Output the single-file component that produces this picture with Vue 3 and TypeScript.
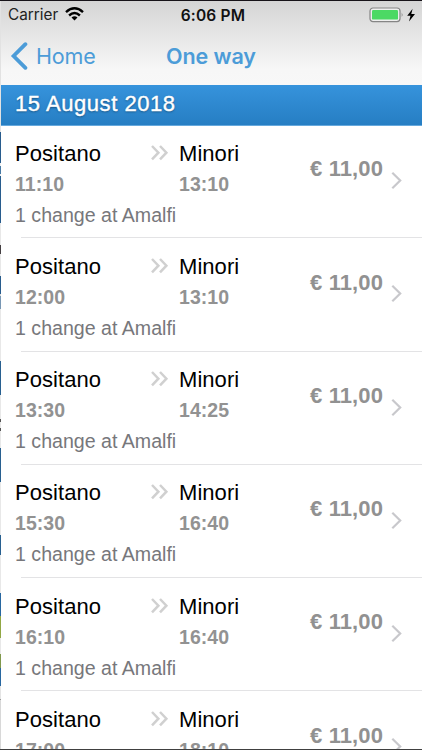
<script setup lang="ts">
interface Trip {
  from: string
  to: string
  departure: string
  arrival: string
  price: string
}

const trips: Trip[] = [
  ['11:10', '13:10'],
  ['12:00', '13:10'],
  ['13:30', '14:25'],
  ['15:30', '16:40'],
  ['16:10', '16:40'],
  ['17:00', '18:10'],
].map(([departure, arrival]) => ({
  from: 'Positano',
  to: 'Minori',
  departure,
  arrival,
  price: '€ 11,00',
}))
</script>

<template>
  <div class="screen">
    <div class="edge"></div>
    <header class="top">
      <div class="status">
        <div class="carrier">
          <span>Carrier</span>
          <svg class="wifi" width="19" height="14" viewBox="0 0 19 14">
            <g fill="none" stroke="#000" stroke-width="2.4">
              <path d="M1 5.2Q9.5-2.5 18 5.2" />
              <path d="M4.1 8.5Q9.5 3.5 14.9 8.5" />
            </g>
            <path d="M6.5 10.6Q9.5 8 12.5 10.6L9.5 13.6Z" />
          </svg>
        </div>
        <span class="clock">6:06 PM</span>
        <svg class="battery" width="48" height="16" viewBox="0 0 48 16">
          <rect x="1" y="1" width="30" height="13.6" rx="3" fill="#eee" stroke="#858585" stroke-width="1.2" />
          <rect x="3" y="3" width="26" height="9.6" rx="1.2" fill="#4cd964" />
          <path d="M32.7 5.5Q34.5 7.8 32.7 10Z" fill="#858585" />
          <path d="M43.6 1.8L38.2 8.8H41.5L40 14.4L46 6.9H42.3Z" />
        </svg>
      </div>
      <nav class="nav">
        <div class="back">
          <svg width="18" height="28" viewBox="0 0 18 28">
            <path d="M15.4 2.2L3.6 14L15.4 25.8" fill="none" stroke="#4c9cd8" stroke-width="3.8" stroke-linecap="round" />
          </svg>
          <span>Home</span>
        </div>
        <h1>One way</h1>
      </nav>
    </header>
    <h2 class="date">15 August 2018</h2>
    <main class="list">
      <article v-for="trip in trips" :key="trip.departure" class="trip">
        <div class="route">
          <div class="place">{{ trip.from }}</div>
          <svg class="arrows" width="20" height="18" viewBox="0 0 20 18">
            <path d="M2 2L8.4 8.7L2 15.4M10 2L16.4 8.7L10 15.4" fill="none" stroke="#d0d0d0" stroke-width="2.5" />
          </svg>
          <div class="place">{{ trip.to }}</div>
          <div class="time">{{ trip.departure }}</div>
          <div></div>
          <div class="time">{{ trip.arrival }}</div>
          <div class="change">1 change at Amalfi</div>
        </div>
        <div class="price">{{ trip.price }}</div>
        <svg class="chevron" width="12" height="19" viewBox="0 0 12 19">
          <path d="M1.3 1.8L9.2 9.5L1.3 17.2" fill="none" stroke="#c8c8cc" stroke-width="2.2" />
        </svg>
      </article>
    </main>
  </div>
</template>

<style>
body {
  overflow: hidden;
}
</style>

<style scoped>
.screen {
  position: relative;
  box-sizing: border-box;
  width: 422px;
  height: 750px;
  overflow: hidden;
  padding-left: 1px;
  border-top: 1px solid #171319;
  border-bottom: 1px solid #404040;
  display: flex;
  flex-direction: column;
  background: #fff;
  font-family: "Liberation Sans", Arial, sans-serif;
}
.edge {
  position: absolute;
  left: 0;
  top: 0;
  width: 1px;
  height: 749px;
  background: linear-gradient(
    #e2e2e2 131px, #285c8d 131px 162px, #eee 162px 165px, #4779a4 165px 173px,
    #eee 173px 175px, #285c8d 175px 222px, #e8e8e8 222px 244px, #443f42 244px 253px,
    #e8e8e8 253px 275px, #285c8d 275px 293px, #ddd 293px 295px, #7897b4 295px 308px,
    #e8e8e8 308px 360px, #286090 360px 394px, #e8e8e8 394px 418px, #555 418px 421px,
    #e8e8e8 421px 427px, #555 427px 430px, #e8e8e8 430px 447px, #286090 447px 481px,
    #e8e8e8 481px 534px, #286090 534px 554px, #e8e8e8 554px 592px, #2867a0 592px 615px,
    #91a744 615px 637px, #e8e8e8 637px 653px, #80984c 653px 667px, #2867a0 667px 685px,
    #e4e4e4 685px 698px, #999 698px 699px, #d8d8d8 699px
  );
}
.top {
  height: 84px;
  flex: none;
  margin-left: -1px;
  background: linear-gradient(#d5d5d5, #f7f7f7 82%, #f8f8f8);
  font-family: Inter, sans-serif;
}
.status {
  display: grid;
  grid-template-columns: 1fr auto 1fr;
  align-items: center;
  height: 27px;
  padding: 0 5px 0 8px;
}
.carrier {
  display: flex;
  align-items: center;
  gap: 7px;
  font-size: 15.3px;
  color: #222;
}
.wifi {
  margin-top: -1px;
}
.clock {
  padding: 1px 0 0 1px;
  font-size: 15.5px;
  font-weight: 600;
  letter-spacing: 0.2px;
  color: #111;
}
.battery {
  justify-self: end;
}
.nav {
  display: grid;
  grid-template-columns: 1fr auto 1fr;
  align-items: center;
  height: 56px;
  padding: 0 0 0 10px;
  margin-right: 10px;
  color: #4c9cd8;
}
.back {
  display: flex;
  align-items: center;
  gap: 8px;
  font-size: 21.5px;
  letter-spacing: -0.15px;
}
h1 {
  margin: 0;
  font-size: 21.5px;
  font-weight: 600;
  letter-spacing: -0.1px;
}
.date {
  box-sizing: border-box;
  flex: none;
  height: 41px;
  margin: 0;
  padding-left: 14px;
  border-bottom: 1px solid #66a9dd;
  background: linear-gradient(#3693dc, #267ec3);
  color: #fff;
  font-size: 22px;
  font-weight: 400;
  line-height: 38px;
  letter-spacing: 0.55px;
  -webkit-text-stroke: 0.4px #fff;
  text-shadow: 0 1px 2px #164f7c;
}
.list {
  flex: none;
  background: #fff;
}
.trip {
  position: relative;
  box-sizing: border-box;
  height: 113.3px;
  padding: 13.5px 19px 0 14px;
  display: flex;
}
.trip::after {
  content: "";
  position: absolute;
  left: 20px;
  right: 0;
  bottom: 1px;
  height: 1px;
  background: #e3e3e5;
}
.route {
  flex: 1;
  display: grid;
  grid-template-columns: 135px 29px auto;
  grid-template-rows: 28px 33px 27px;
  align-content: start;
}
.place {
  font-size: 22px;
  line-height: 28px;
  letter-spacing: 0.05px;
  color: #000;
}
.arrows {
  margin-top: 4px;
}
.time {
  font-size: 19.5px;
  line-height: 33px;
  font-weight: 700;
  letter-spacing: 0.05px;
  color: #929292;
}
.change {
  grid-column: 1 / -1;
  font-size: 19.6px;
  line-height: 28px;
  color: #77777b;
}
.price {
  padding-top: 14.8px;
  font-size: 22px;
  line-height: 30px;
  font-weight: 700;
  letter-spacing: 0.1px;
  color: #919191;
}
.chevron {
  margin: 31.5px 0 0 8px;
}
</style>
